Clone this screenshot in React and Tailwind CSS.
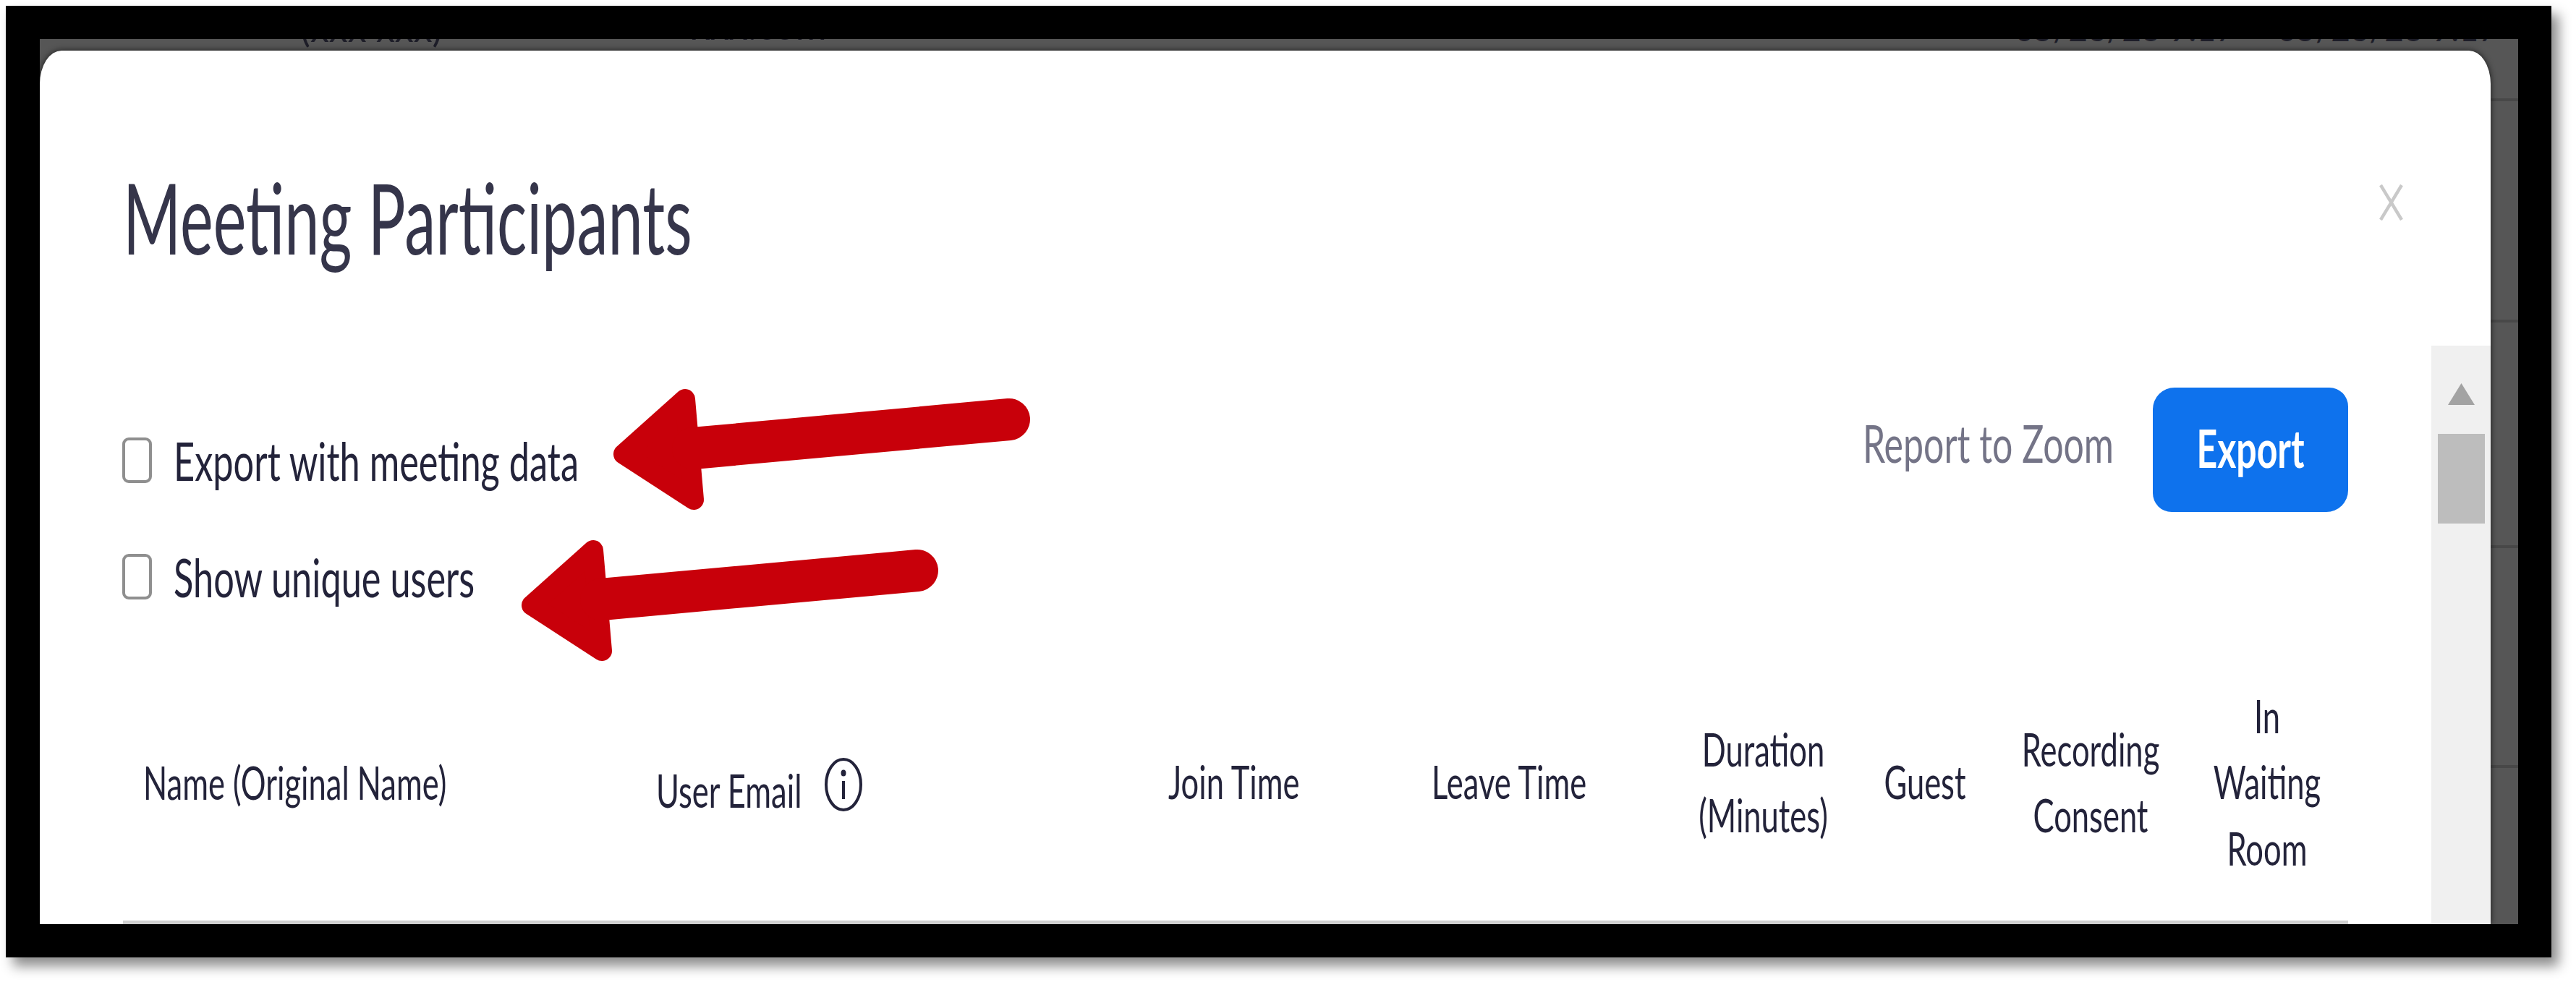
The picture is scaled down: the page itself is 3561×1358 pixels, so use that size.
const TABLE_COLS = [
  { id: 'name', lines: ['Name (Original Name)'], cls: 'pl-[28px] pt-[2px] text-left' },
  { id: 'email', lines: ['User Email'], cls: 'pl-[27px] text-left', icon: true },
  { id: 'join', lines: ['Join Time'], cls: 'pl-[27px] text-left' },
  { id: 'leave', lines: ['Leave Time'], cls: 'pl-[27px] text-left' },
  { id: 'duration', lines: ['Duration', '(Minutes)'], cls: 'text-center' },
  { id: 'guest', lines: ['Guest'], cls: 'text-center' },
  { id: 'recording', lines: ['Recording', 'Consent'], cls: 'text-center' },
  { id: 'waiting', lines: ['In', 'Waiting', 'Room'], cls: 'pl-[8px] text-center' },
];

// source picture is stretched vertically, so the text is too
function Tall({ children, className = '' }) {
  return <span className={`inline-block origin-center scale-y-[1.45] whitespace-nowrap ${className}`}>{children}</span>;
}

function RedArrow({ className }) {
  return (
    <svg className={`absolute ${className}`} width="600" height="190" viewBox="0 0 600 190">
      <polygon points="22,98 107,22 119,161" fill="#c8000a" stroke="#c8000a" strokeWidth="28" strokeLinejoin="round" />
      <line x1="118" y1="90" x2="555" y2="50" stroke="#c8000a" strokeWidth="58" strokeLinecap="round" />
    </svg>
  );
}

function CheckRow({ label }) {
  return (
    <label className="flex h-[63px] items-center gap-[30px]">
      <span className="-ml-px h-[63px] w-[41px] rounded-[9px] border-[4px] border-[#8f8f8f] bg-white" />
      <Tall className="text-[50.5px] leading-[63px] text-[#23233a]">{label}</Tall>
    </label>
  );
}

function InfoIcon() {
  return (
    <svg className="ml-[31px] -translate-y-[9px]" width="54" height="76" viewBox="0 0 54 76" fill="none">
      <ellipse cx="27" cy="38" rx="24" ry="35" stroke="#23233a" strokeWidth="4" />
      <ellipse cx="27" cy="22" rx="3.5" ry="4.5" fill="#23233a" />
      <line x1="27" y1="33" x2="27" y2="58" stroke="#23233a" strokeWidth="4" />
    </svg>
  );
}

export default function App() {
  return (
    <div className="relative h-[1358px] w-[3561px] overflow-hidden bg-white font-['Lato','Liberation_Sans',sans-serif]">
      <div className="ml-[8px] mt-[8px] h-[1316px] w-[3519px] bg-black pb-[46px] pl-[47px] pr-[46px] pt-[46px] shadow-[10px_12px_16px_rgba(0,0,0,0.45)]">
        {/* Dimmed table behind the dialog */}
        <div className="relative h-full w-full overflow-hidden bg-[#565656]">
          <div className="-mt-[40px] flex h-[54px] items-end text-[46px] leading-[54px] text-[#1d1d28]">
            <span className="ml-[360px] w-[541px] shrink-0 -translate-y-[3px] text-[52px]">(xxx xxx)</span>
            <span className="w-[1829px] shrink-0 -translate-y-[6px] text-[52px]">xxx.com</span>
            <span className="w-[363px] shrink-0 -translate-y-px">05/26/23 9:17</span>
            <span className="shrink-0 -translate-y-px">05/26/23 9:17</span>
          </div>
          <div className="h-[72px] border-b-[4px] border-[#484848]" />
          <div className="h-[306px] border-b-[4px] border-[#484848]" />
          <div className="h-[312px] border-b-[4px] border-[#484848]" />
          <div className="h-[304px] border-b-[4px] border-[#484848]" />

          {/* Dialog */}
          <div className="absolute bottom-0 left-0 right-[38px] top-[16px] flex flex-col overflow-hidden rounded-t-[30px_46px] bg-white shadow-[0_0_8px_rgba(0,0,0,0.7)]">
            <div className="flex h-[408px] shrink-0 justify-between pl-[115px] pr-[121px]">
              <div className="pt-[185px]">
                <span className="inline-block origin-center scale-y-[1.58] whitespace-nowrap text-[86.5px] font-normal leading-[90px] text-[#35354a]">Meeting Participants</span>
              </div>
              <svg className="mt-[185px]" width="33" height="50" viewBox="0 0 33 50" fill="none">
                <path d="M2 1 L31 49 M31 1 L2 49" stroke="#c9c9c9" strokeWidth="4.5" />
              </svg>
            </div>

            <div className="flex min-h-0 flex-1">
              <div className="min-w-0 flex-1 pl-[115px] pr-[115px]">
                <div className="flex h-[352px] justify-between">
                  <div className="flex flex-col gap-[98px] pt-[127px]">
                    <CheckRow label="Export with meeting data" />
                    <CheckRow label="Show unique users" />
                  </div>
                  <div className="flex items-start gap-[54px] pt-[58px]">
                    <div className="mt-[46px]">
                      <Tall className="text-[50px] leading-[60px] text-[#747487]">Report to Zoom</Tall>
                    </div>
                    <button className="flex h-[172px] w-[270px] items-center justify-center rounded-[30px_26px] bg-[#0e72ed] pb-[3px] text-white">
                      <Tall className="text-[50px] font-bold">Export</Tall>
                    </button>
                  </div>
                </div>

                {/* Table header */}
                <div className="mt-[115px] grid h-[333px] grid-cols-[710px_708px_364px_368px_235px_212px_246px_234px] items-start border-b-[5px] border-[#d0d0d0] pb-[53px] text-[43.5px] leading-[91.5px] text-[#23233a]">
                  {TABLE_COLS.map(col => (
                    <div key={col.id} className={`flex h-[274px] flex-col justify-center ${col.cls}`}>
                      {col.lines.map(line => (
                        <div key={line} className={col.icon ? 'flex items-center pt-[24px]' : ''}>
                          <Tall>{line}</Tall>
                          {col.icon && <InfoIcon />}
                        </div>
                      ))}
                    </div>
                  ))}
                </div>
              </div>

              {/* Scrollbar */}
              <div className="flex w-[82px] shrink-0 flex-col items-center bg-[#f0f0f0] pt-[52px]">
                <svg width="37" height="30" viewBox="0 0 37 30"><polygon points="18.5,0 37,30 0,30" fill="#a3a3a3" /></svg>
                <div className="mt-[40px] h-[124px] w-[65px] bg-[#bdbdbd]" />
              </div>
            </div>
          </div>
        </div>
      </div>

      <RedArrow className="left-[840px] top-[530px]" />
      <RedArrow className="left-[713px] top-[739px]" />
    </div>
  );
}
